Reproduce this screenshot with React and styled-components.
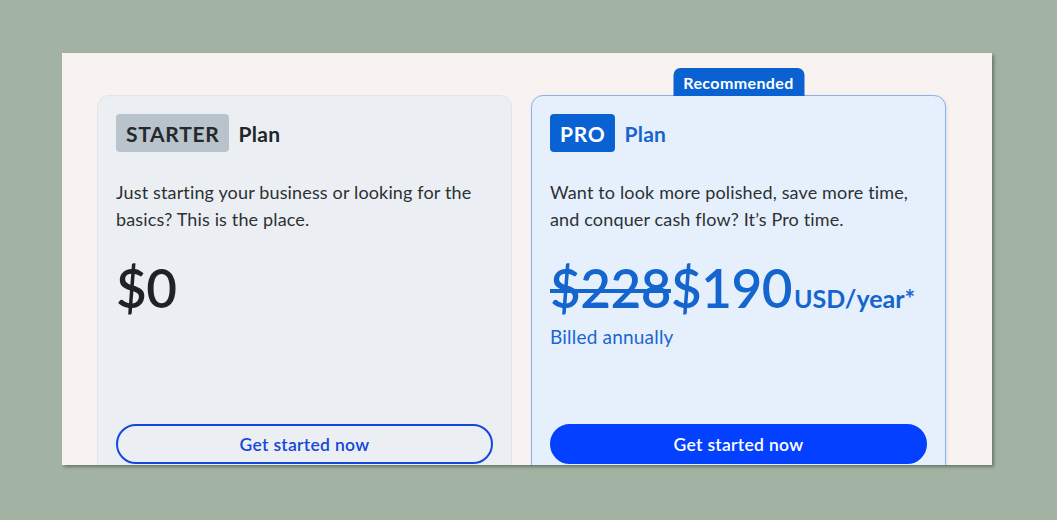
import React from 'react';
import styled, { createGlobalStyle } from 'styled-components';

const GlobalStyle = createGlobalStyle`
  html, body {
    margin: 0;
    padding: 0;
    background: #a3b3a3;
    font-family: 'Lato', 'Noto Sans', sans-serif;
  }
`;

const Page = styled.div`
  padding: 53px 0 0 62px;
  height: 520px;
  box-sizing: border-box;
`;

const Panel = styled.div`
  width: 930px;
  height: 412px;
  background: #f8f3f1;
  box-shadow: 2px 2px 3px rgba(60, 75, 60, 0.55);
  overflow: hidden;
  box-sizing: border-box;
  padding: 42px 0 0 35px;
  display: flex;
  gap: 19px;
  align-items: flex-start;
`;

const Card = styled.div`
  position: relative;
  width: 415px;
  height: 388px;
  box-sizing: border-box;
  padding: 18px;
  border-radius: 12px;
  display: flex;
  flex-direction: column;
  background: ${p => (p.$pro ? '#e6f0fd' : '#ebeff3')};
  border: 1px solid ${p => (p.$pro ? '#8db2e8' : '#dfe5ea')};
  box-shadow: ${p => (p.$pro ? '1px 1px 3px rgba(40, 90, 170, 0.15)' : 'none')};
`;

const Badge = styled.div`
  position: absolute;
  bottom: 100%;
  left: 50%;
  transform: translateX(-50%);
  height: 28px;
  width: 131px;
  display: flex;
  align-items: center;
  justify-content: center;
  background: #0a62d2;
  color: #fff;
  font-weight: 700;
  font-size: 16px;
  letter-spacing: 0.4px;
  border-radius: 7px 7px 0 0;
`;

const TitleRow = styled.div`
  display: flex;
  align-items: center;
  gap: 9px;
  height: 38px;
`;

const Chip = styled.span`
  display: inline-flex;
  align-items: center;
  height: 38px;
  padding: 0 10px;
  box-sizing: border-box;
  border-radius: 4px;
  font-weight: 700;
  font-size: 21px;
  letter-spacing: 0.7px;
  background: ${p => (p.$pro ? '#0a62d2' : '#b8c3cc')};
  color: ${p => (p.$pro ? '#ffffff' : '#25292b')};
`;

const PlanWord = styled.span`
  font-weight: 700;
  font-size: 21px;
  letter-spacing: 0.3px;
  color: ${p => (p.$pro ? '#1565cf' : '#222628')};
`;

const Desc = styled.p`
  margin: 27px 0 0;
  font-size: 18px;
  line-height: 27px;
  letter-spacing: 0.15px;
  color: #2d3133;
`;

const PriceRow = styled.div`
  margin-top: 22px;
  display: flex;
  align-items: baseline;
  line-height: 65px;
  color: ${p => (p.$pro ? '#1565cf' : '#1f2325')};
`;

const Amount = styled.span`
  font-size: 53px;
  font-weight: 600;
  letter-spacing: -0.5px;
`;

const OldAmount = styled.s`
  font-size: 53px;
  font-weight: 600;
  letter-spacing: -0.5px;
  text-decoration-thickness: 4px;
`;

const Unit = styled.span`
  font-size: 25px;
  font-weight: 700;
  margin-left: 2px;
`;

const Billed = styled.div`
  font-size: 19px;
  letter-spacing: 0.2px;
  color: #1a66d0;
  margin-top: -6px;
`;

const Button = styled.button`
  margin-top: auto;
  height: 40px;
  width: 100%;
  border-radius: 20px;
  font-family: inherit;
  font-size: 17.5px;
  font-weight: 600;
  letter-spacing: 0.3px;
  cursor: pointer;
  box-sizing: border-box;
  border: 2px solid ${p => (p.$filled ? '#0340ff' : '#1547e0')};
  background: ${p => (p.$filled ? '#0340ff' : 'transparent')};
  color: ${p => (p.$filled ? '#ffffff' : '#1547d8')};
`;

const App = () => {
  return (
    <>
      <GlobalStyle />
      <Page>
        <Panel>
          <Card>
            <TitleRow>
              <Chip>STARTER</Chip>
              <PlanWord>Plan</PlanWord>
            </TitleRow>
            <Desc>
              Just starting your business or looking for the basics? This is the place.
            </Desc>
            <PriceRow>
              <Amount>$0</Amount>
            </PriceRow>
            <Button>Get started now</Button>
          </Card>
          <Card $pro>
            <Badge>Recommended</Badge>
            <TitleRow>
              <Chip $pro>PRO</Chip>
              <PlanWord $pro>Plan</PlanWord>
            </TitleRow>
            <Desc>
              Want to look more polished, save more time, and conquer cash flow? It’s Pro time.
            </Desc>
            <PriceRow $pro>
              <OldAmount>$228</OldAmount>
              <Amount>$190</Amount>
              <Unit>USD/year*</Unit>
            </PriceRow>
            <Billed>Billed annually</Billed>
            <Button $filled>Get started now</Button>
          </Card>
        </Panel>
      </Page>
    </>
  );
};

export default App;
